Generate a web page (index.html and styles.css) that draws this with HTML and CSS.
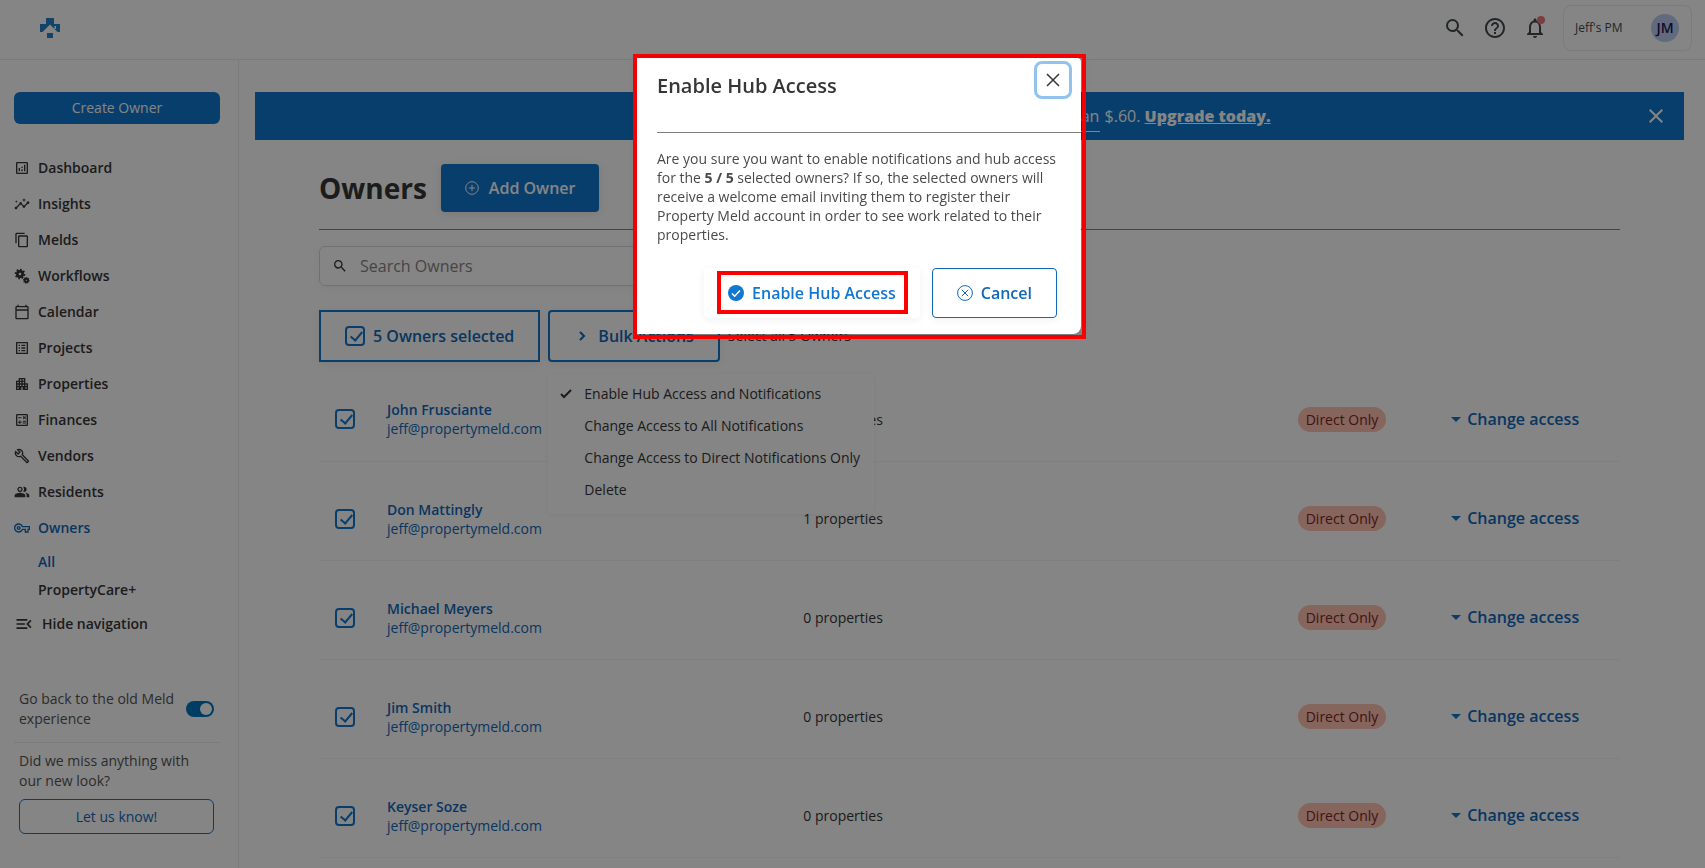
FILE: index.html
```html
<!DOCTYPE html>
<html lang="en">
<head>
    <meta charset="UTF-8">
    <title>Owners</title>
    <link rel="stylesheet" href="styles.css">
</head>
<body>
<header class="topbar">
    <a href="#" class="logo" aria-label="Home">
        <svg width="20" height="20" viewBox="0 0 20 20"><path d="M6 0h8v6h6v8h-2.500L10 6.500 2.500 14H0V6h6zM7 15h6v5H7z"/><path class="logo-window" d="M14.500 8h1.500v3h-1.500z"/></svg>
    </a>
    <div class="tools">
        <button class="icon-btn" aria-label="Search"><svg width="24" height="24" viewBox="0 0 24 24"><path d="M15.500 14h-.79l-.28-.27A6.471 6.471 0 0 0 16 9.500 6.500 6.500 0 1 0 9.500 16c1.610 0 3.090-.59 4.230-1.570l.27.28v.79l5 4.990L20.490 19l-4.990-5zm-6 0C7.010 14 5 11.990 5 9.500S7.010 5 9.500 5 14 7.010 14 9.500 11.990 14 9.500 14z"/></svg></button>
        <button class="icon-btn" aria-label="Help"><svg width="24" height="24" viewBox="0 0 24 24"><path d="M11 18h2v-2h-2v2zm1-16C6.480 2 2 6.480 2 12s4.480 10 10 10 10-4.480 10-10S17.520 2 12 2zm0 18c-4.410 0-8-3.590-8-8s3.590-8 8-8 8 3.590 8 8-3.590 8-8 8zm0-14c-2.210 0-4 1.790-4 4h2c0-1.100.9-2 2-2s2 .9 2 2c0 2-3 1.750-3 5h2c0-2.250 3-2.500 3-5 0-2.210-1.790-4-4-4z"/></svg></button>
        <button class="icon-btn" aria-label="Notifications"><svg width="24" height="24" viewBox="0 0 24 24"><path d="M12 22c1.100 0 2-.9 2-2h-4c0 1.100.9 2 2 2zm6-6v-5c0-3.070-1.630-5.640-4.500-6.320V4c0-.83-.67-1.500-1.500-1.500s-1.500.67-1.500 1.500v.68C7.640 5.360 6 7.920 6 11v5l-2 2v1h16v-1l-2-2zm-2 1H8v-6c0-2.480 1.510-4.500 4-4.500s4 2.020 4 4.500v6z"/></svg><span class="dot"></span></button>
        <button class="profile">Jeff's PM <span class="avatar">JM</span></button>
    </div>
</header>

<div class="layout">
    <aside class="sidebar">
        <button class="create">Create Owner</button>
        <nav>
            <a href="#" class="nav-item"><svg width="16" height="16" viewBox="0 0 24 24"><path d="M19 3H5c-1.100 0-2 .9-2 2v14c0 1.100.9 2 2 2h14c1.100 0 2-.9 2-2V5c0-1.100-.9-2-2-2zm0 16H5V5h14v14zM7 12h2v5H7zm8-5h2v10h-2zm-4 7h2v3h-2zm0-4h2v2h-2z"/></svg>Dashboard</a>
            <a href="#" class="nav-item"><svg width="16" height="16" viewBox="0 0 24 24"><path d="M21 8c-1.450 0-2.260 1.440-1.930 2.510l-3.550 3.560c-.3-.09-.74-.09-1.040 0l-2.550-2.550C12.270 10.450 11.460 9 10 9c-1.450 0-2.270 1.440-1.930 2.520l-4.560 4.550C2.440 15.740 1 16.550 1 18c0 1.100.9 2 2 2 1.450 0 2.260-1.440 1.930-2.510l4.550-4.560c.3.09.74.09 1.040 0l2.550 2.550C12.730 16.550 13.540 18 15 18c1.450 0 2.270-1.440 1.930-2.520l3.560-3.550C21.560 12.260 23 11.450 23 10c0-1.100-.9-2-2-2z"/><path d="m15 9 .94-2.070L18 6l-2.060-.93L15 3l-.92 2.070L12 6l2.080.93zM3.500 11 4 9l2-.5L4 8l-.5-2L3 8l-2 .5L3 9z"/></svg>Insights</a>
            <a href="#" class="nav-item"><svg width="16" height="16" viewBox="0 0 24 24"><path d="M16 1H4c-1.100 0-2 .9-2 2v14h2V3h12V1zm3 4H8c-1.100 0-2 .9-2 2v14c0 1.100.9 2 2 2h11c1.100 0 2-.9 2-2V7c0-1.100-.9-2-2-2zm0 16H8V7h11v14z"/></svg>Melds</a>
            <a href="#" class="nav-item"><svg width="16" height="16" viewBox="0 0 24 24"><circle class="gear" cx="9" cy="9" r="4"/><circle class="gear-teeth" cx="9" cy="9" r="6.500" pathLength="16"/><circle class="gear small" cx="18.500" cy="18.500" r="2.500"/><circle class="gear-teeth small" cx="18.500" cy="18.500" r="4" pathLength="16"/></svg>Workflows</a>
            <a href="#" class="nav-item"><svg width="16" height="16" viewBox="0 0 24 24"><path d="M20 3h-1V1h-2v2H7V1H5v2H4c-1.100 0-2 .9-2 2v16c0 1.100.9 2 2 2h16c1.100 0 2-.9 2-2V5c0-1.100-.9-2-2-2zm0 18H4V10h16v11zm0-13H4V5h16v3z"/></svg>Calendar</a>
            <a href="#" class="nav-item"><svg width="16" height="16" viewBox="0 0 24 24"><path d="M19 5v14H5V5h14m1.100-2H3.900c-.5 0-.9.4-.9.9v16.200c0 .4.4.9.9.9h16.200c.4 0 .9-.5.9-.9V3.900c0-.5-.5-.9-.9-.9zM11 7h6v2h-6V7zm0 4h6v2h-6v-2zm0 4h6v2h-6zM7 7h2v2H7zm0 4h2v2H7zm0 4h2v2H7z"/></svg>Projects</a>
            <a href="#" class="nav-item"><svg width="16" height="16" viewBox="0 0 24 24"><path d="M17 11V3H7v4H3v14h8v-4h2v4h8V11h-4zM7 19H5v-2h2v2zm0-4H5v-2h2v2zm0-4H5V9h2v2zm4 4H9v-2h2v2zm0-4H9V9h2v2zm0-4H9V5h2v2zm4 8h-2v-2h2v2zm0-4h-2V9h2v2zm0-4h-2V5h2v2zm4 12h-2v-2h2v2zm0-4h-2v-2h2v2z"/></svg>Properties</a>
            <a href="#" class="nav-item"><svg width="16" height="16" viewBox="0 0 24 24"><path d="M19 3H5c-1.100 0-2 .9-2 2v14c0 1.100.9 2 2 2h14c1.100 0 2-.9 2-2V5c0-1.100-.9-2-2-2zm0 16H5V5h14v14z"/><path d="M6.250 7.720h5v1.500h-5zM13 15.750h5v1.500h-5zm0-2.500h5v1.500h-5zM8 18h1.500v-2h2v-1.500h-2v-2H8v2H6V16h2zm6.090-7.050 1.410-1.410 1.410 1.410 1.060-1.060-1.410-1.420 1.410-1.410L16.910 6 15.500 7.410 14.090 6l-1.060 1.060 1.410 1.410-1.410 1.420z"/></svg>Finances</a>
            <a href="#" class="nav-item"><svg width="16" height="16" viewBox="0 0 24 24"><path d="m22.610 18.990-9.080-9.080c.93-2.340.45-5.100-1.440-7C9.790.61 6.210.4 3.660 2.260L7.500 6.110 6.080 7.520 2.250 3.690C.39 6.230.6 9.820 2.900 12.110c1.860 1.860 4.570 2.350 6.890 1.480l9.110 9.110c.39.39 1.020.39 1.410 0l2.300-2.300c.4-.38.4-1.010 0-1.410zm-3 1.600-9.460-9.460c-.61.45-1.290.72-2 .82-1.360.2-2.790-.21-3.830-1.250C3.370 9.760 2.930 8.500 3 7.260l3.090 3.090 4.240-4.240-3.090-3.090c1.240-.07 2.490.37 3.440 1.310 1.080 1.080 1.490 2.570 1.240 3.960-.12.71-.42 1.370-.88 1.960l9.450 9.450-.88.890z"/></svg>Vendors</a>
            <a href="#" class="nav-item"><svg width="16" height="16" viewBox="0 0 24 24"><path d="M16.670 13.130C18.040 14.060 19 15.320 19 17v3h4v-3c0-2.180-3.570-3.470-6.330-3.870zM15 12c2.210 0 4-1.790 4-4s-1.790-4-4-4c-.47 0-.91.1-1.330.24C14.500 5.270 15 6.580 15 8s-.5 2.730-1.330 3.760c.42.140.86.240 1.330.240zM9 12c2.210 0 4-1.790 4-4s-1.790-4-4-4-4 1.790-4 4 1.790 4 4 4zm0-6c1.100 0 2 .9 2 2s-.9 2-2 2-2-.9-2-2 .9-2 2-2zM9 13c-2.670 0-8 1.340-8 4v3h16v-3c0-2.660-5.330-4-8-4z"/></svg>Residents</a>
            <a href="#" class="nav-item active"><svg width="16" height="16" viewBox="0 0 24 24"><path d="M22 19h-6v-4h-2.680c-1.140 2.420-3.600 4-6.320 4-3.860 0-7-3.140-7-7s3.140-7 7-7c2.720 0 5.170 1.580 6.320 4H24v6h-2v4zm-4-2h2v-4h2v-2H11.940l-.23-.67C11.010 8.340 9.110 7 7 7c-2.760 0-5 2.240-5 5s2.240 5 5 5c2.110 0 4.010-1.340 4.710-3.330l.23-.67H18v4zM7 15c-1.650 0-3-1.350-3-3s1.350-3 3-3 3 1.350 3 3-1.350 3-3 3zm0-4c-.55 0-1 .45-1 1s.45 1 1 1 1-.45 1-1-.45-1-1-1z"/></svg>Owners</a>
            <div class="sub-nav">
                <a href="#" class="active">All</a>
                <a href="#">PropertyCare+</a>
            </div>
        </nav>
        <button class="hide-nav"><svg width="20" height="20" viewBox="0 0 24 24"><path d="M3 18h13v-2H3v2zm0-5h10v-2H3v2zm0-7v2h13V6H3zm18 9.590L17.420 12 21 8.410 19.590 7l-5 5 5 5L21 15.590z"/></svg>Hide navigation</button>
        <div class="old-meld">
            <label for="old">Go back to the old Meld experience</label>
            <input type="checkbox" id="old" class="switch" checked>
        </div>
        <div class="feedback">
            <p>Did we miss anything with our new look?</p>
            <button>Let us know!</button>
        </div>
    </aside>

    <main>
        <div class="banner">
            <p><a href="#" class="offer">Coordinate all maintenance around the clock for less than</a> $.60. <a href="#" class="upgrade">Upgrade today.</a></p>
            <button aria-label="Dismiss"><svg width="24" height="24" viewBox="0 0 24 24"><path d="M19 6.410 17.590 5 12 10.590 6.410 5 5 6.410 10.590 12 5 17.590 6.410 19 12 13.410 17.590 19 19 17.590 13.410 12z"/></svg></button>
        </div>
        <div class="content">
            <div class="title">
                <h1>Owners</h1>
                <button class="add"><svg width="14" height="14" viewBox="0 0 14 14"><circle cx="7" cy="7" r="6.300"/><path d="M7 3.800v6.400M3.800 7h6.400"/></svg>Add Owner</button>
            </div>
            <div class="search">
                <svg width="16" height="16" viewBox="0 0 24 24"><path d="M15.500 14h-.79l-.28-.27A6.471 6.471 0 0 0 16 9.500 6.500 6.500 0 1 0 9.500 16c1.610 0 3.090-.59 4.230-1.570l.27.28v.79l5 4.990L20.490 19l-4.990-5zm-6 0C7.010 14 5 11.990 5 9.500S7.010 5 9.500 5 14 7.010 14 9.500 11.990 14 9.500 14z"/></svg>
                <input type="text" placeholder="Search Owners" aria-label="Search Owners">
            </div>
            <div class="bulk">
                <label class="selected"><input type="checkbox" class="check" checked>5 Owners selected</label>
                <div class="actions">
                    <button class="bulk-btn"><svg width="8" height="12" viewBox="0 0 8 12"><path d="m2 2 4 4-4 4"/></svg>Bulk Actions</button>
                    <ul class="menu">
                        <li><button class="picked"><svg width="12" height="10" viewBox="0 0 12 10"><path d="m1 5 3 3 7-7"/></svg>Enable Hub Access and Notifications</button></li>
                        <li><button>Change Access to All Notifications</button></li>
                        <li><button>Change Access to Direct Notifications Only</button></li>
                        <li><button>Delete</button></li>
                    </ul>
                </div>
                <a href="#" class="select-all">Select all 5 Owners</a>
            </div>
            <table>
                <tbody>
                <tr>
                    <td class="col-check"><input type="checkbox" class="check" aria-label="John Frusciante" checked></td>
                    <td class="col-name"><a href="#" class="name">John Frusciante</a><a href="#">jeff@propertymeld.com</a></td>
                    <td class="col-props">1 properties</td>
                    <td class="col-badge"><span class="badge">Direct Only</span></td>
                    <td><button class="change">Change access</button></td>
                </tr>
                <tr>
                    <td><input type="checkbox" class="check" aria-label="Don Mattingly" checked></td>
                    <td><a href="#" class="name">Don Mattingly</a><a href="#">jeff@propertymeld.com</a></td>
                    <td>1 properties</td>
                    <td><span class="badge">Direct Only</span></td>
                    <td><button class="change">Change access</button></td>
                </tr>
                <tr>
                    <td><input type="checkbox" class="check" aria-label="Michael Meyers" checked></td>
                    <td><a href="#" class="name">Michael Meyers</a><a href="#">jeff@propertymeld.com</a></td>
                    <td>0 properties</td>
                    <td><span class="badge">Direct Only</span></td>
                    <td><button class="change">Change access</button></td>
                </tr>
                <tr>
                    <td><input type="checkbox" class="check" aria-label="Jim Smith" checked></td>
                    <td><a href="#" class="name">Jim Smith</a><a href="#">jeff@propertymeld.com</a></td>
                    <td>0 properties</td>
                    <td><span class="badge">Direct Only</span></td>
                    <td><button class="change">Change access</button></td>
                </tr>
                <tr>
                    <td><input type="checkbox" class="check" aria-label="Keyser Soze" checked></td>
                    <td><a href="#" class="name">Keyser Soze</a><a href="#">jeff@propertymeld.com</a></td>
                    <td>0 properties</td>
                    <td><span class="badge">Direct Only</span></td>
                    <td><button class="change">Change access</button></td>
                </tr>
                </tbody>
            </table>
        </div>
    </main>
</div>

<div class="overlay">
    <div class="frame">
        <div class="modal" role="dialog" aria-labelledby="modal-title">
            <div class="modal-head">
                <h2 id="modal-title">Enable Hub Access</h2>
                <button class="close" aria-label="Close"><svg width="14" height="14" viewBox="0 0 14 14"><path d="m1 1 12 12M13 1 1 13"/></svg></button>
            </div>
            <p>Are you sure you want to enable notifications and hub access for the <b>5 / 5</b> selected owners? If so, the selected owners will receive a welcome email inviting them to register their Property Meld account in order to see work related to their properties.</p>
            <div class="modal-foot">
                <button class="enable"><svg width="16" height="16" viewBox="0 0 16 16"><circle cx="8" cy="8" r="8"/><path d="m4 8.500 2.700 2.700L12 5.500"/></svg>Enable Hub Access</button>
                <button class="cancel"><svg width="16" height="16" viewBox="0 0 16 16"><circle cx="8" cy="8" r="7.400"/><path d="m4.800 4.800 6.400 6.400M11.200 4.800l-6.400 6.400"/></svg>Cancel</button>
            </div>
        </div>
    </div>
</div>
</body>
</html>
```
FILE: styles.css
```css
* {
    box-sizing: border-box;
    padding: 0;
    margin: 0;
}

body {
    font: 14px/20px "Open Sans", "Noto Sans", sans-serif;
    color: #363636;
    background: #fff;
    height: 100vh;
    overflow: hidden;
    display: flex;
    flex-direction: column;
}

button, input {
    font: inherit;
    color: inherit;
    border: 0;
    background: none;
}

button {
    display: flex;
    align-items: center;
    justify-content: center;
    cursor: pointer;
}

a {
    color: inherit;
    text-decoration: none;
}

svg {
    fill: currentColor;
    flex: none;
}

.topbar {
    flex: none;
    height: 60px;
    padding: 5px 13px 9px 40px;
    border-bottom: 1px solid #ebebeb;
    display: flex;
    align-items: center;
    justify-content: space-between;
}

.logo {
    height: 20px;
    color: #2680c4;
}

.logo-window {
    fill: #fff;
}

.tools {
    display: flex;
    align-items: center;
    gap: 16px;
    color: #424a50;
}

.icon-btn {
    position: relative;
    width: 24px;
    height: 24px;
}

.dot {
    position: absolute;
    top: 0;
    right: 2px;
    width: 8px;
    height: 8px;
    border-radius: 50%;
    background: #e87878;
}

.profile {
    width: 129px;
    height: 46px;
    border: 1px solid #ebebeb;
    border-radius: 8px;
    justify-content: space-between;
    padding: 0 12px 0 11px;
    font-size: 12px;
    font-weight: 500;
}

.avatar {
    width: 28px;
    height: 28px;
    border-radius: 50%;
    background: #bccdef;
    color: #221155;
    font-weight: 600;
    font-size: 14px;
    line-height: 28px;
}

.layout {
    flex: 1;
    min-height: 0;
    display: flex;
}

.sidebar {
    flex: none;
    width: 239px;
    padding: 32px 18px 0 14px;
    border-right: 1px solid #ebebeb;
}

.create {
    width: 100%;
    height: 32px;
    border-radius: 6px;
    background: #1177d0;
    color: #fff;
    margin-bottom: 26px;
}

.nav-item {
    display: flex;
    align-items: center;
    gap: 8px;
    height: 36px;
    font-weight: 600;
}

.gear, .gear-teeth {
    fill: none;
    stroke: currentColor;
    stroke-width: 4;
}

.gear-teeth {
    stroke-width: 3;
    stroke-dasharray: 1;
}

.gear.small {
    stroke-width: 3;
}

.gear-teeth.small {
    stroke-width: 2;
}

.active {
    color: #1168b9;
}

.sub-nav {
    padding: 2px 0 0 24px;
    font-weight: 600;
}

.sub-nav a {
    display: block;
    padding: 4px 0;
}

.hide-nav {
    height: 40px;
    gap: 8px;
    font-weight: 600;
}

.old-meld {
    margin-top: 45px;
    padding: 0 6px 13px 5px;
    border-bottom: 1px solid #ebebeb;
    display: flex;
    align-items: center;
    gap: 8px;
    color: #555;
}

.switch {
    appearance: none;
    flex: none;
    width: 28px;
    height: 16px;
    padding: 2px;
    border-radius: 8px;
    background: #0076be;
    display: flex;
    justify-content: flex-end;
}

.switch::before {
    content: "";
    width: 12px;
    height: 12px;
    border-radius: 50%;
    background: #fff;
}

.feedback {
    padding: 8px 6px 0 5px;
    color: #555;
}

.feedback button {
    width: 100%;
    height: 35px;
    margin-top: 8px;
    border: 1px solid #1177d0;
    border-radius: 6px;
    color: #1168b9;
}

main {
    flex: 1;
    min-width: 0;
    padding: 32px 21px 0 16px;
}

.banner {
    display: flex;
    align-items: center;
    height: 48px;
    padding-right: 16px;
    background: #1177d0;
    color: #fff;
    font-size: 16px;
}

.banner p {
    flex: 1;
    text-align: center;
    padding-left: 40px;
    white-space: nowrap;
}

.offer {
    padding: 0 1px 4px 0;
    border-bottom: 1px solid #fff;
}

.upgrade {
    font-weight: 800;
    text-decoration: underline;
}

.content {
    padding: 24px 64px 0;
}

.title {
    display: flex;
    align-items: center;
    gap: 14px;
    padding-bottom: 17px;
    border-bottom: 1px solid #808080;
}

h1 {
    font-size: 28px;
    line-height: 40px;
}

.add {
    height: 48px;
    padding: 0 24px;
    gap: 10px;
    border-radius: 4px;
    background: #1177d0;
    color: #fff;
    font-size: 16px;
    font-weight: 600;
    box-shadow: 0 2px 8px rgba(0, 0, 0, .1);
}

.add svg, .bulk-btn svg, .picked svg, .close svg, .cancel svg {
    fill: none;
    stroke: currentColor;
}

.search {
    width: 400px;
    height: 40px;
    margin: 16px 0 24px;
    padding: 0 12px;
    border: 1px solid #d5dbdf;
    border-radius: 6px;
    display: flex;
    align-items: center;
    gap: 12px;
    font-size: 16px;
    box-shadow: 0 2px 8px rgba(0, 0, 0, .04);
}

.search input {
    flex: 1;
    min-width: 0;
}

.search input::placeholder {
    color: #858585;
}

.bulk {
    display: flex;
    align-items: center;
    gap: 8px;
}

.selected, .bulk-btn {
    display: flex;
    align-items: center;
    height: 52px;
    padding: 0 24px;
    border: 2px solid #1177d0;
    color: #1168b9;
    font-size: 16px;
    font-weight: 600;
    box-shadow: 0 2px 8px rgba(0, 0, 0, .06);
}

.selected {
    gap: 8px;
}

.bulk-btn {
    gap: 12px;
    padding: 0 24px 0 28px;
    border-radius: 4px;
}

.bulk-btn svg {
    stroke-width: 2;
}

.check {
    appearance: none;
    flex: none;
    display: block;
    width: 20px;
    height: 20px;
    border: 2px solid #1177d0;
    border-radius: 4px;
}

.check::before {
    content: "";
    display: block;
    width: 5px;
    height: 10px;
    margin: 1px 0 0 6px;
    border: solid #1177d0;
    border-width: 0 2px 2px 0;
    transform: rotate(40deg);
}

.actions {
    position: relative;
}

.menu {
    position: absolute;
    top: 64px;
    left: 0;
    z-index: 1;
    padding: 4px 14px 8px 12px;
    list-style: none;
    background: #fff;
    border-radius: 4px;
    box-shadow: 0 1px 5px rgba(0, 0, 0, .06);
}

.menu button {
    height: 32px;
    padding-left: 24px;
    white-space: nowrap;
}

.menu .picked {
    padding-left: 0;
    gap: 12px;
}

.picked svg {
    stroke-width: 2;
}

table {
    width: 100%;
    table-layout: fixed;
    border-collapse: collapse;
}

tr {
    border-bottom: 1px solid #f3f3f3;
}

td {
    height: 99px;
    padding-top: 16px;
    line-height: 19px;
}

td:first-child {
    padding-left: 16px;
}

td a {
    display: block;
    color: #1168b9;
}

.name {
    font-weight: 600;
}

.col-check {
    width: 68px;
}

.col-name {
    width: 32%;
}

.col-props {
    width: 38%;
}

.col-badge {
    width: 11.8%;
}

.badge {
    display: inline-block;
    padding: 3px 8px;
    border-radius: 13px;
    background: #ffc1b0;
    color: #7e2727;
}

.change {
    gap: 6px;
    color: #1168b9;
    font-size: 16px;
    font-weight: 600;
}

.change::before {
    content: "";
    border: 5px solid transparent;
    border-top-color: #1177d0;
    border-bottom: 0;
}

.overlay {
    position: fixed;
    inset: 0;
    z-index: 2;
    display: flex;
    align-items: flex-start;
    justify-content: center;
    padding: 54px 0 0 14px;
    background: rgba(0, 0, 0, .48);
}

.frame {
    width: 453px;
    padding: 0 1px 1px 0;
    border: 4px solid #f00;
}

.modal {
    background: #fff;
    border-radius: 0 4px 8px 0;
    padding-left: 20px;
    box-shadow: 0 0 12px rgba(0, 0, 0, .15);
}

.modal-head {
    display: flex;
    justify-content: space-between;
    align-items: flex-start;
    height: 75px;
    padding: 3px 9px 0 0;
    border-bottom: 1px solid #808080;
}

h2 {
    font-size: 20px;
    line-height: 28px;
    font-weight: 600;
    padding-top: 11px;
}

.close {
    width: 38px;
    height: 38px;
    border: 3px solid #90c3ee;
    border-radius: 8px;
}

.close svg {
    stroke-width: 1.5;
}

.modal p {
    padding: 16px 24px 0 0;
    line-height: 19px;
    color: #4a4a4a;
}

.modal-foot {
    display: flex;
    justify-content: flex-end;
    gap: 12px;
    padding: 24px 24px 16px 0;
    font-size: 16px;
    font-weight: 600;
    color: #1168b9;
}

.modal-foot button {
    gap: 8px;
    height: 50px;
    padding: 0 24px;
    border-radius: 4px;
    box-shadow: 0 2px 8px rgba(0, 0, 0, .06);
}

.modal-foot .enable {
    position: relative;
    color: #1177d0;
}

/* highlight round the confirm action */
.enable::after {
    content: "";
    position: absolute;
    inset: 3px 12px 4px 13px;
    border: 4px solid #f00;
}

.enable path {
    fill: none;
    stroke: #fff;
    stroke-width: 1.5;
}

.modal-foot .cancel {
    border: 1px solid #1168b9;
}
```
